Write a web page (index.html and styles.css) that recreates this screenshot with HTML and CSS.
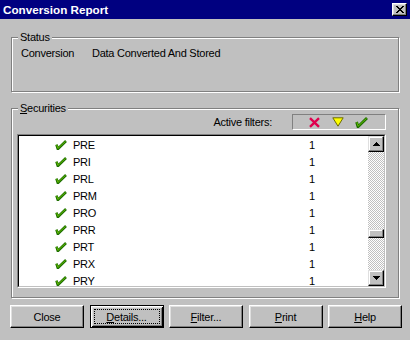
FILE: index.html
```html
<!DOCTYPE html>
<html>
<head>
<meta charset="utf-8">
<title>Conversion Report</title>
<link rel="stylesheet" href="styles.css">
</head>
<body>
<div class="window">
  <div class="titlebar">
    <span class="title">Conversion Report</span>
    <span class="title-close">
      <svg width="8" height="7" viewBox="0 0 8 7" shape-rendering="crispEdges"><path fill="#000" d="M0 0h2v1H0z M6 0h2v1H6z M1 1h2v1H1z M5 1h2v1H5z M2 2h4v1H2z M3 3h2v1H3z M2 4h4v1H2z M1 5h2v1H1z M5 5h2v1H5z M0 6h2v1H0z M6 6h2v1H6z"/></svg>
    </span>
  </div>
  <div class="content">
    <fieldset class="group status">
      <legend>Status</legend>
      <div class="status-row"><span class="status-label">Conversion</span><span>Data Converted And Stored</span></div>
    </fieldset>
    <fieldset class="group securities">
      <legend><u>S</u>ecurities</legend>
      <div class="sec-body">
        <div class="filter-bar">
          <span>Active filters:</span>
          <div class="filter-box">
            <svg class="ficon-x" width="13" height="11" viewBox="0 0 13 11"><path d="M2 1.2L11 9.8M11 1.2L2 9.8" stroke="#e0004e" stroke-width="2.4" fill="none"/></svg>
            <svg class="ficon-tri" width="12" height="10" viewBox="0 0 12 10"><path d="M0.8 0.8H11.2L6 9.2Z" fill="#ffff00" stroke="#6b6b00" stroke-width="1"/></svg>
            <svg class="ficon-check" width="13" height="11" viewBox="0 0 13 11"><path d="M1.6 5L3 9.8L12 1" stroke="#1c6e00" stroke-width="2.8" fill="none" stroke-linejoin="round"/><path d="M1.8 5.2L3.1 9.2L11.6 1.3" stroke="#6cc400" stroke-width="0.9" fill="none"/></svg>
          </div>
        </div>
        <div class="listbox">
          <div class="listbox-inner">
            <div class="rows">
              <div class="row"><svg class="check" width="12" height="10" viewBox="0 0 12 10"><path d="M1.5 4.6L2.8 9L11 1" stroke="#1c6e00" stroke-width="2.6" fill="none" stroke-linejoin="round"/><path d="M1.7 4.8L2.9 8.4L10.6 1.3" stroke="#6cc400" stroke-width="0.9" fill="none"/></svg><span class="name">PRE</span><span>1</span></div>
              <div class="row"><svg class="check" width="12" height="10" viewBox="0 0 12 10"><path d="M1.5 4.6L2.8 9L11 1" stroke="#1c6e00" stroke-width="2.6" fill="none" stroke-linejoin="round"/><path d="M1.7 4.8L2.9 8.4L10.6 1.3" stroke="#6cc400" stroke-width="0.9" fill="none"/></svg><span class="name">PRI</span><span>1</span></div>
              <div class="row"><svg class="check" width="12" height="10" viewBox="0 0 12 10"><path d="M1.5 4.6L2.8 9L11 1" stroke="#1c6e00" stroke-width="2.6" fill="none" stroke-linejoin="round"/><path d="M1.7 4.8L2.9 8.4L10.6 1.3" stroke="#6cc400" stroke-width="0.9" fill="none"/></svg><span class="name">PRL</span><span>1</span></div>
              <div class="row"><svg class="check" width="12" height="10" viewBox="0 0 12 10"><path d="M1.5 4.6L2.8 9L11 1" stroke="#1c6e00" stroke-width="2.6" fill="none" stroke-linejoin="round"/><path d="M1.7 4.8L2.9 8.4L10.6 1.3" stroke="#6cc400" stroke-width="0.9" fill="none"/></svg><span class="name">PRM</span><span>1</span></div>
              <div class="row"><svg class="check" width="12" height="10" viewBox="0 0 12 10"><path d="M1.5 4.6L2.8 9L11 1" stroke="#1c6e00" stroke-width="2.6" fill="none" stroke-linejoin="round"/><path d="M1.7 4.8L2.9 8.4L10.6 1.3" stroke="#6cc400" stroke-width="0.9" fill="none"/></svg><span class="name">PRO</span><span>1</span></div>
              <div class="row"><svg class="check" width="12" height="10" viewBox="0 0 12 10"><path d="M1.5 4.6L2.8 9L11 1" stroke="#1c6e00" stroke-width="2.6" fill="none" stroke-linejoin="round"/><path d="M1.7 4.8L2.9 8.4L10.6 1.3" stroke="#6cc400" stroke-width="0.9" fill="none"/></svg><span class="name">PRR</span><span>1</span></div>
              <div class="row"><svg class="check" width="12" height="10" viewBox="0 0 12 10"><path d="M1.5 4.6L2.8 9L11 1" stroke="#1c6e00" stroke-width="2.6" fill="none" stroke-linejoin="round"/><path d="M1.7 4.8L2.9 8.4L10.6 1.3" stroke="#6cc400" stroke-width="0.9" fill="none"/></svg><span class="name">PRT</span><span>1</span></div>
              <div class="row"><svg class="check" width="12" height="10" viewBox="0 0 12 10"><path d="M1.5 4.6L2.8 9L11 1" stroke="#1c6e00" stroke-width="2.6" fill="none" stroke-linejoin="round"/><path d="M1.7 4.8L2.9 8.4L10.6 1.3" stroke="#6cc400" stroke-width="0.9" fill="none"/></svg><span class="name">PRX</span><span>1</span></div>
              <div class="row"><svg class="check" width="12" height="10" viewBox="0 0 12 10"><path d="M1.5 4.6L2.8 9L11 1" stroke="#1c6e00" stroke-width="2.6" fill="none" stroke-linejoin="round"/><path d="M1.7 4.8L2.9 8.4L10.6 1.3" stroke="#6cc400" stroke-width="0.9" fill="none"/></svg><span class="name">PRY</span><span>1</span></div>
            </div>
            <div class="scrollbar">
              <div class="sb-btn"><svg width="7" height="4" viewBox="0 0 7 4" shape-rendering="crispEdges"><path d="M3 0h1v1H3z M2 1h3v1H2z M1 2h5v1H1z M0 3h7v1H0z"/></svg></div>
              <div class="sb-track"><div class="sb-thumb"></div></div>
              <div class="sb-btn"><svg width="7" height="4" viewBox="0 0 7 4" shape-rendering="crispEdges"><path d="M0 0h7v1H0z M1 1h5v1H1z M2 2h3v1H2z M3 3h1v1H3z"/></svg></div>
            </div>
          </div>
        </div>
      </div>
    </fieldset>
    <div class="buttons">
      <button class="btn">Close</button>
      <button class="btn btn-default"><span class="focus"><u>D</u>etails...</span></button>
      <button class="btn"><u>F</u>ilter...</button>
      <button class="btn"><u>P</u>rint</button>
      <button class="btn"><u>H</u>elp</button>
    </div>
  </div>
</div>
</body>
</html>
```

FILE: styles.css
```css
* { box-sizing: border-box; }
html, body { margin: 0; padding: 0; }
body {
  width: 410px;
  height: 340px;
  overflow: hidden;
  background: #c0c0c0;
  color: #000;
  font-family: "Liberation Sans", Arial, sans-serif;
  font-size: 11px;
  letter-spacing: -0.25px;
}
.window {
  width: 410px;
  height: 340px;
  display: flex;
  flex-direction: column;
}
.titlebar {
  height: 19px;
  background: #000080;
  color: #fff;
  display: flex;
  align-items: center;
  justify-content: space-between;
  padding: 0 3px 0 3px;
}
.title {
  font-weight: bold;
  font-size: 11.7px;
  letter-spacing: 0;
}
.title-close {
  width: 15px;
  height: 13px;
  background: #c0c0c0;
  border: 1px solid;
  border-color: #fff #000 #000 #fff;
  box-shadow: inset -1px -1px 0 #808080, inset 1px 1px 0 #dfdfdf;
  display: flex;
  align-items: center;
  justify-content: center;
}
.content {
  padding: 12px 11px 0 11px;
  display: flex;
  flex-direction: column;
}
.group {
  margin: 0;
  padding: 0;
  min-width: 0;
  border: 1px solid #808080;
  box-shadow: inset 1px 1px 0 #fff, 1px 1px 0 #fff;
}
.group legend {
  margin-left: 6px;
  padding: 0 2px;
  line-height: 13px;
  background: #c0c0c0;
}
.status { height: 61px; }
.status-row {
  display: flex;
  padding: 3px 0 0 9px;
  line-height: 13px;
}
.status-label { width: 71px; }
.securities {
  margin-top: 10px;
  height: 196px;
}
.sec-body {
  padding: 0 12px 0 5px;
  display: flex;
  flex-direction: column;
}
.filter-bar {
  display: flex;
  justify-content: flex-end;
  align-items: center;
  gap: 20px;
  margin-top: -1px;
  height: 16px;
}
.filter-box {
  width: 94px;
  height: 16px;
  border: 1px solid;
  border-color: #808080 #fff #fff #808080;
  display: flex;
  align-items: center;
  padding-left: 15px;
  gap: 11px;
}
.listbox {
  margin-top: 4px;
  height: 154px;
  border: 1px solid;
  border-color: #808080 #fff #fff #808080;
}
.listbox-inner {
  height: 100%;
  border: 1px solid;
  border-color: #000 #c0c0c0 #c0c0c0 #000;
  background: #fff;
  display: flex;
}
.rows {
  flex: 1;
  overflow: hidden;
}
.row {
  height: 17px;
  display: flex;
  align-items: center;
  padding-left: 36px;
}
.check {
  flex: none;
  margin-right: 6px;
}
.name { width: 236px; }
.scrollbar {
  width: 16px;
  flex: none;
  display: flex;
  flex-direction: column;
}
.sb-btn {
  height: 16px;
  flex: none;
  background: #c0c0c0;
  border: 1px solid;
  border-color: #dfdfdf #000 #000 #dfdfdf;
  box-shadow: inset -1px -1px 0 #808080, inset 1px 1px 0 #fff;
  display: flex;
  align-items: center;
  justify-content: center;
}
.sb-track {
  flex: 1;
  background-color: #c0c0c0;
  background-image: conic-gradient(#fff 25%, #c0c0c0 0 50%, #fff 0 75%, #c0c0c0 0);
  background-size: 2px 2px;
}
.sb-thumb {
  margin-top: 77px;
  height: 9px;
  background: #c0c0c0;
  border: 1px solid;
  border-color: #dfdfdf #000 #000 #dfdfdf;
  box-shadow: inset -1px -1px 0 #808080, inset 1px 1px 0 #fff;
}
.buttons {
  display: flex;
  gap: 5.5px;
  margin: 7px 0 0 -1px;
}
.btn {
  flex: none;
  width: 74px;
  height: 23px;
  padding: 0;
  margin: 0;
  font: inherit;
  letter-spacing: inherit;
  color: #000;
  background: #c0c0c0;
  border: 1px solid;
  border-color: #fff #000 #000 #fff;
  box-shadow: inset -1px -1px 0 #808080, inset 1px 1px 0 #dfdfdf;
  display: flex;
  align-items: center;
  justify-content: center;
}
.btn-default {
  border: 1px solid #000;
  box-shadow: inset 1px 1px 0 #fff, inset -1px -1px 0 #000, inset 2px 2px 0 #dfdfdf, inset -2px -2px 0 #808080;
  padding: 3px;
}
.focus {
  flex: 1;
  align-self: stretch;
  border: 1px dotted #000;
  display: flex;
  align-items: center;
  justify-content: center;
}
```
